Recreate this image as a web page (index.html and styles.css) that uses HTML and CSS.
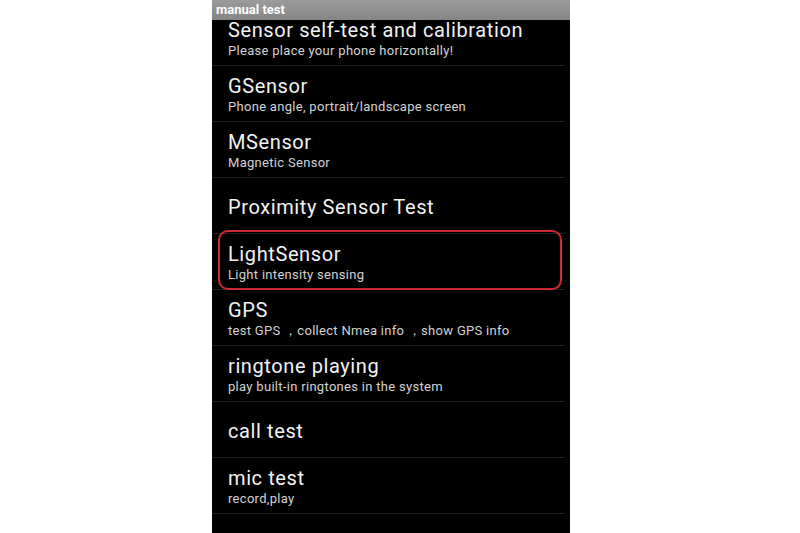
FILE: index.html
```html
<!DOCTYPE html>
<html>

<head>
    <title>manual test</title>
    <link rel="stylesheet" href="styles.css">
</head>

<body>
    <div class="screen">
        <div class="titlebar">manual test</div>
        <div class="list">
            <div class="item first">
                <div class="name">Sensor self-test and calibration</div>
                <div class="desc">Please place your phone horizontally!</div>
            </div>
            <div class="item">
                <div class="name">GSensor</div>
                <div class="desc">Phone angle, portrait/landscape screen</div>
            </div>
            <div class="item">
                <div class="name">MSensor</div>
                <div class="desc">Magnetic Sensor</div>
            </div>
            <div class="item">
                <div class="name">Proximity Sensor Test</div>
            </div>
            <div class="item marked">
                <div class="name">LightSensor</div>
                <div class="desc">Light intensity sensing</div>
            </div>
            <div class="item">
                <div class="name">GPS</div>
                <div class="desc">test GPS ，collect Nmea info ，show GPS info</div>
            </div>
            <div class="item">
                <div class="name">ringtone playing</div>
                <div class="desc">play built-in ringtones in the system</div>
            </div>
            <div class="item">
                <div class="name">call test</div>
            </div>
            <div class="item">
                <div class="name">mic test</div>
                <div class="desc">record,play</div>
            </div>
            <div class="item">
                <div class="name">&nbsp;</div>
            </div>
        </div>
    </div>
</body>

</html>
```

FILE: styles.css
```css
body {
    margin: 0;
    background: #fff;
    font-family: Roboto, "Liberation Sans", sans-serif;
}

.screen {
    margin-left: 212px;
    width: 358px;
    height: 533px;
    background: #000;
    overflow: hidden;
}

.titlebar {
    height: 20px;
    line-height: 20px;
    padding-left: 4px;
    background: linear-gradient(#9c9c9c, #858585);
    color: #fff;
    font-size: 13px;
    font-weight: bold;
}

/* list is scrolled a little, so the first row is cut under the bar */
.list {
    margin-top: -10px;
}

.item {
    position: relative;
    height: 53px;
    margin-right: 5px;
    padding-left: 16px;
    padding-top: 2px;
    border-bottom: 1px solid #1e1e1e;
    display: flex;
    flex-direction: column;
    justify-content: center;
}

.name {
    color: #f2f2f2;
    font-size: 20px;
    line-height: 24px;
    letter-spacing: 0.6px;
}

.desc {
    color: #d2d2d2;
    font-size: 13px;
    line-height: 17px;
    letter-spacing: 0.3px;
}

.marked:after {
    content: '';
    position: absolute;
    top: -4px;
    bottom: -1px;
    left: 6px;
    right: 3px;
    border: 2px solid #cf2a33;
    border-radius: 10px;
}
```
